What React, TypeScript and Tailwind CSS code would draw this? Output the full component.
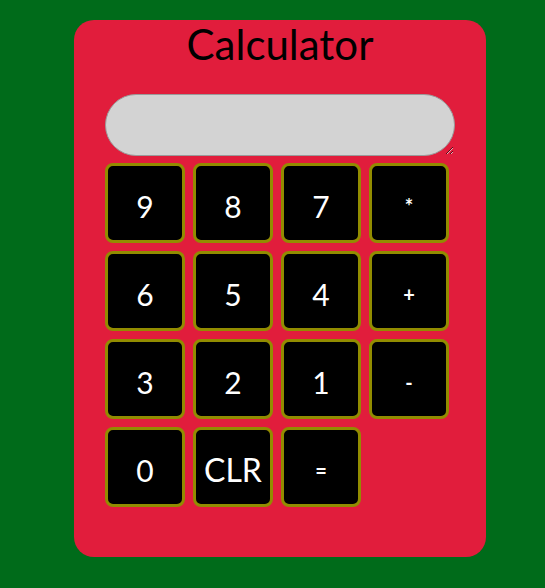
import React from "react";

const keys = ["9", "8", "7", "*", "6", "5", "4", "+", "3", "2", "1", "-", "0", "CLR", "="];

export default function App() {
  return (
    <div
      className="min-h-[588px] w-full bg-[#006b1a] pt-5 pl-[74px]"
      style={{ fontFamily: "Lato, 'Open Sans', sans-serif" }}
    >
      <div className="flex h-[537px] w-[412px] flex-col rounded-[20px] bg-[#e11d3c] px-[31px]">
        <h1 className="mt-0 text-center text-[42px] leading-[48px] text-black">Calculator</h1>
        <textarea
          className="mt-[26px] block h-[62px] w-[350px] rounded-[31px] border border-[#9a9a9a] bg-[#d3d3d3] outline-none"
          aria-label="display"
        />
        <div className="mt-[7px] grid w-[344px] grid-cols-4 gap-2">
          {keys.map((k) => {
            const op = k === "*" || k === "+" || k === "-" || k === "=";
            return (
              <button
                key={k}
                className={
                  "flex h-20 w-20 items-center justify-center rounded-lg border-[3px] border-[#928c00] bg-black pt-[6px] text-white " +
                  (op ? "text-[20px] font-bold" : k === "CLR" ? "text-[32px]" : "text-[30px]")
                }
              >
                {k}
              </button>
            );
          })}
        </div>
      </div>
    </div>
  );
}
